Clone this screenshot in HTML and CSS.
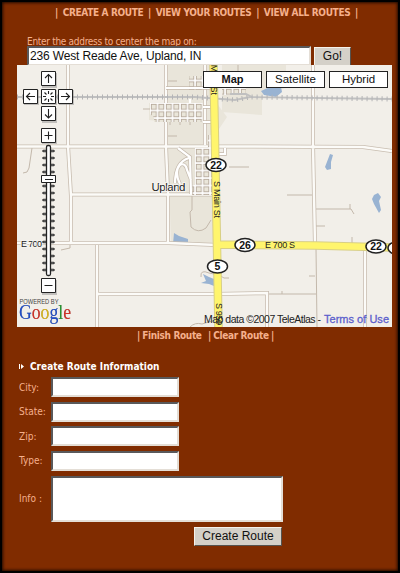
FILE: index.html
```html
<!DOCTYPE html>
<html lang="en">
<head>
<meta charset="utf-8">
<title>Create a Route</title>
<link rel="stylesheet" href="styles.css">
</head>
<body>
<div class="page">
  <nav class="nav"><span>|</span><a>CREATE A ROUTE</a><span>|</span><a>VIEW YOUR ROUTES</a><span>|</span><a>VIEW ALL ROUTES</a><span>|</span></nav>
  <form class="search">
    <label for="address">Enter the address to center the map on:</label>
    <div class="search-row"><input id="address" class="field address" value="236 West Reade Ave, Upland, IN"><button type="button" class="button go">Go!</button></div>
  </form>
  <div class="map">
    <svg class="map-canvas" viewBox="17 65 375 262" width="375" height="262">
      <defs>
        <g id="shield"><ellipse rx="10" ry="6.5" fill="#fff" stroke="#222" stroke-width="1.5"/></g>
        <pattern id="blocks" width="7.5" height="7.5" patternUnits="userSpaceOnUse" x="150" y="103">
          <rect width="7.5" height="7.5" fill="#fff"/>
          <rect x="1.300" y="1.300" width="5" height="5" fill="#eae6da" stroke="#b5a99a" stroke-width=".9"/>
        </pattern>
      </defs>
      <rect x="17" y="65" width="375" height="262" fill="#f2efe9"/>
      <path fill="#e9e5da" d="M167 65H215V101L227 117 217 132V244H171L168 148V122L149 120V103H167zM222 65H286V88L262 95V115L222 112z"/>
      <path fill="#99b3d2" d="M261 91L270 87H281L282 92 276 97 264 95zM330 154l3 1-2 7v7l-4 1-2-3zM374 195l4-2 3 4-2 4 2 9-2 3-5-9-2-5zM174 233l5 3 9 3v5h-15zM203 274l6 3 5 2v7l-5-2-8-1 5-2z"/>
      <path fill="none" stroke="#c3b8ab" d="M32 148l-3 20-2 4-4 1M61 250l9-2v-4M167 81h10M168 136h9M143 109h7M192 195v15l-2 2 1 15q7 7 15 1l5-8M190 327q5-5 12-3l10-3M201 277q-1-8 8-4l10 2 5 3h5M229 167h20M287 195h27M315 209h36l3 5M350 204v5M316 226h9M352 237v6M309 276h6M268 294h48M282 291v3M316 248l1 79M367 318l-3 9M238 65v18M170 120v5M180 120v5M190 120v5"/>
      <path fill="none" stroke="#c8bdb0" stroke-width="4" d="M17 146.500H240L363 147l29 4M68 65v81l3 50v47M71 194.500H217M17 243h152l48 2M97 245v82M97 294h120l50-1v34M166 65v82l2 47v50M313 65v81l2 98M365 248v79M205 65v80"/>
      <path fill="none" stroke="#fcfbf8" stroke-width="2.400" d="M17 146.500H240L363 147l29 4M68 65v81l3 50v47M71 194.500H217M17 243h152l48 2M97 245v82M97 294h120l50-1v34M166 65v82l2 47v50M313 65v81l2 98M365 248v79M205 65v80"/>
      <path fill="url(#blocks)" d="M150 103h52.500v19H154v-5l-4-3zM189 76h14v14h-14zM195 148h22v47h-25v-10h3zM208 135h7v14h-7zM222 88h24v7h-24z"/>
      <g fill="none" stroke="#c3b8ab" stroke-width="3.500"><path d="M166 88h48M203 107h11M203 122h11M178 148l12 9 1 37M189 158q-14 4-14 25M180 184c-9-18 5-26 7-14l4 10M215 154h10v-6"/></g>
      <g fill="none" stroke="#fff" stroke-width="2.200"><path d="M166 88h48M190 103v-4M203 107h11M203 122h11M178 148l12 9 1 37M189 158q-14 4-14 25M180 184c-9-18 5-26 7-14l4 10M215 154h10v-6"/></g>
      <path fill="none" stroke="#c0c0c0" stroke-width="1.800" d="M17 97H195L235 100 250 97 392 99M230 94h16l6 3"/>
      <path fill="none" stroke="#b4b4b6" stroke-width="5" stroke-dasharray="1 4" d="M17 97H195L235 100 250 97 392 99"/>
      <path fill="none" stroke="#d8cf85" stroke-width="8.500" d="M213.500 65L216 195 218.500 327M217 244.500L315 245.500 392 247.500"/>
      <path fill="none" stroke="#fff56d" stroke-width="6.500" d="M213.500 65L216 195 218.500 327M217 244.500L315 245.500 392 247.500"/>
      <g class="map-text">
        <text x="151.500" y="191" font-size="11.500" textLength="34" class="halo">Upland</text>
        <text x="21" y="247" font-size="9" textLength="21" class="halo">E 700</text>
        <text x="265" y="248" font-size="9" textLength="30">E 700 S</text>
        <text transform="translate(213.500 181) rotate(90)" font-size="9" textLength="37">S Main St</text>
        <text transform="translate(211 56) rotate(90)" font-size="9" textLength="39">N Main St</text>
        <text transform="translate(215.500 303) rotate(90)" font-size="9" textLength="22">S 950</text>
      </g>
      <g class="shield-text">
        <use href="#shield" x="216" y="165"/><text x="216" y="168.500">22</text>
        <use href="#shield" x="245" y="245"/><text x="245" y="248.500">26</text>
        <use href="#shield" x="217.500" y="266.500"/><text x="217.500" y="270">5</text>
        <use href="#shield" x="398" y="248"/>
        <use href="#shield" x="376" y="246.500"/><text x="376" y="250">22</text>
      </g>
      <g>
        <path fill="#777" opacity=".4" d="M42 73h15v15H42zM24 90h15v15H24zM42 90h15v15H42zM59 90h15v15H59zM42 108h15v15H42zM42 129h15v15H42zM42 280h15v15H42z"/>
        <path fill="#fff" stroke="#222" d="M41.500 71.500h14v14h-14zM23.500 89.500h14v14h-14zM41.500 89.500h14v14h-14zM58.500 89.500h14v14h-14zM41.500 106.500h14v14h-14zM41.500 128.500h14v14h-14zM41.500 278.500h14v14h-14z"/>
        <path fill="none" stroke="#222" stroke-width="1.100" d="M48.500 83v-9M45 78l3.500-3.500L52 78M48.500 109v9M45 114.500l3.500 3.500 3.500-3.500M35 96.500h-9M30 93l-3.500 3.500L30 100M61 96.500h9M66 93l3.500 3.500L66 100M44.500 135.500h8M48.500 131.500v8M44.500 285.500h8M48.500 91v3M48.500 99v3M43 96.500h3M51 96.500h3M44.500 92.500l2 2M52.500 92.500l-2 2M44.500 100.500l2-2M52.500 100.500l-2-2"/>
        <path fill="none" stroke="#333" stroke-width="2.500" stroke-linecap="round" d="M43.500 151h10m-10 7h10m-10 7h10m-10 7h10m-10 7h10m-10 7h10m-10 7h10m-10 7h10m-10 7h10m-10 7h10m-10 7h10m-10 7h10m-10 7h10m-10 7h10m-10 7h10m-10 7h10m-10 7h10m-10 7h10"/>
        <path fill="none" stroke="#8a8a8a" stroke-width=".8" d="M43.500 151h10m-10 7h10m-10 7h10m-10 7h10m-10 7h10m-10 7h10m-10 7h10m-10 7h10m-10 7h10m-10 7h10m-10 7h10m-10 7h10m-10 7h10m-10 7h10m-10 7h10m-10 7h10m-10 7h10m-10 7h10"/>
        <rect x="46.500" y="145.500" width="4" height="130" rx="1.500" fill="#fff" stroke="#222" stroke-width="1.300"/>
        <path fill="#fff" stroke="#222" d="M41.500 175.500h14v7h-14z"/><path d="M45 179.500h8" stroke="#222"/>
      </g>
      <text x="19.500" y="303.500" class="powered" textLength="39" lengthAdjust="spacingAndGlyphs">POWERED BY</text>
      <text x="19" y="319" class="logo" textLength="52" lengthAdjust="spacingAndGlyphs"><tspan fill="#244fc6">G</tspan><tspan fill="#d13328">o</tspan><tspan fill="#d9b51c">o</tspan><tspan fill="#244fc6">g</tspan><tspan fill="#289331">l</tspan><tspan fill="#d13328">e</tspan></text>
      <g class="map-text"><text x="204" y="323" font-size="10.500" textLength="117">Map data ©2007 TeleAtlas -</text><text x="324" y="323" font-size="11" textLength="65" class="terms">Terms of Use</text></g>
    </svg>
    <div class="map-types"><span class="type selected">Map</span><span class="type">Satellite</span><span class="type">Hybrid</span></div>
  </div>
  <div class="route-actions"><span>|</span><a>Finish Route</a><span class="second">|</span><a>Clear Route</a><span>|</span></div>
  <form class="details">
    <h2><svg width="6" height="6" viewBox="0 0 6 6"><path d="M0 0h1v5H0zM2 0l3 2.500L2 5z" fill="#fff"/></svg><span>Create Route Information</span></h2>
    <div class="row"><label for="city">City:</label><input class="field" id="city"></div>
    <div class="row"><label for="state">State:</label><input class="field" id="state"></div>
    <div class="row"><label for="zip">Zip:</label><input class="field" id="zip"></div>
    <div class="row"><label for="type">Type:</label><input class="field" id="type"></div>
    <div class="row info"><label for="info">Info :</label><textarea class="field" id="info"></textarea></div>
    <button type="button" class="button create">Create Route</button>
  </form>
</div>
</body>
</html>
```
FILE: styles.css
```css
* { box-sizing: border-box; }
body { margin: 0; }
.page {
  width: 400px;
  height: 573px;
  overflow: hidden;
  padding: 5px 5px 0 15px;
  border: 2px solid #000;
  background: #802c00;
  box-shadow: inset 0 0 3px 1px #210b00;
  color: #f5b08c;
  font-family: "DejaVu Sans Condensed", "DejaVu Sans", sans-serif;
  font-size: 10px;
}
.nav {
  display: flex;
  justify-content: space-between;
  width: 303px;
  height: 12px;
  margin-left: 38px;
  font-weight: bold;
  letter-spacing: -.35px;
  line-height: 12px;
  white-space: nowrap;
}
.search { height: 46px; padding: 19px 0 0 10px; }
.search label { display: block; height: 8px; letter-spacing: -.3px; line-height: 7px; white-space: nowrap; }
.search-row { display: flex; gap: 3px; align-items: center; }
.field {
  display: block;
  width: 128px;
  height: 20px;
  margin: 0;
  padding: 0 1px;
  border: 2px solid;
  border-color: #59595b #e4ded6 #e4ded6 #59595b;
  border-radius: 0;
  background: #fff;
  color: #111;
  font: 12px "Liberation Sans", sans-serif;
  letter-spacing: -.15px;
  resize: none;
}
.field.address { width: 284px; }
.button {
  display: block;
  height: 19px;
  padding: 0;
  border: 1px solid;
  border-color: #f5f2ec #55534f #55534f #f5f2ec;
  border-radius: 0;
  background: #d4d0c8;
  color: #111;
  font: 12px/16px "Liberation Sans", sans-serif;
}
.go { width: 37px; }
.map { position: relative; width: 375px; height: 262px; }
.map-canvas { display: block; }
.map-text, .map-types { font-family: "Liberation Sans", sans-serif; }
.map-text { fill: #222; }
.halo { stroke: #f5f3ef; stroke-width: 2px; paint-order: stroke; }
.terms { fill: #5c60cc; stroke: #5c60cc; stroke-width: .3px; }
.shield-text { font: bold 10.5px "Liberation Sans", sans-serif; text-anchor: middle; fill: #111; }
.powered { font: 6.5px "Liberation Sans", sans-serif; fill: #444; }
.logo { font: 20px "Liberation Serif", serif; filter: drop-shadow(.7px .7px .3px #999); }
.map-types { position: absolute; top: 6px; left: 186px; display: flex; gap: 4px; }
.type {
  width: 59px;
  height: 17px;
  border: 1px solid #222;
  background: #fff;
  color: #111;
  font-size: 11.5px;
  line-height: 15px;
  text-align: center;
}
.selected { font-weight: bold; font-size: 11px; }
.route-actions {
  display: flex;
  justify-content: space-between;
  width: 137px;
  height: 17px;
  margin-left: 120px;
  font-weight: bold;
  letter-spacing: -.35px;
  line-height: 18px;
  white-space: nowrap;
}
.second { margin-left: 4px; }
.details { padding: 17px 0 0 2px; }
h2 {
  display: flex;
  align-items: center;
  gap: 5px;
  height: 12px;
  margin: 0 0 4px;
  color: #fff;
  font-size: 10px;
  line-height: 12px;
}
.row { display: flex; align-items: center; height: 20px; margin-bottom: 4.5px; }
.row label { width: 32px; white-space: nowrap; }
.info { height: 46px; margin-top: 5px; }
.info .field { width: 232px; height: 46px; }
.create { width: 88px; margin: 5px 0 0 175px; }
```
